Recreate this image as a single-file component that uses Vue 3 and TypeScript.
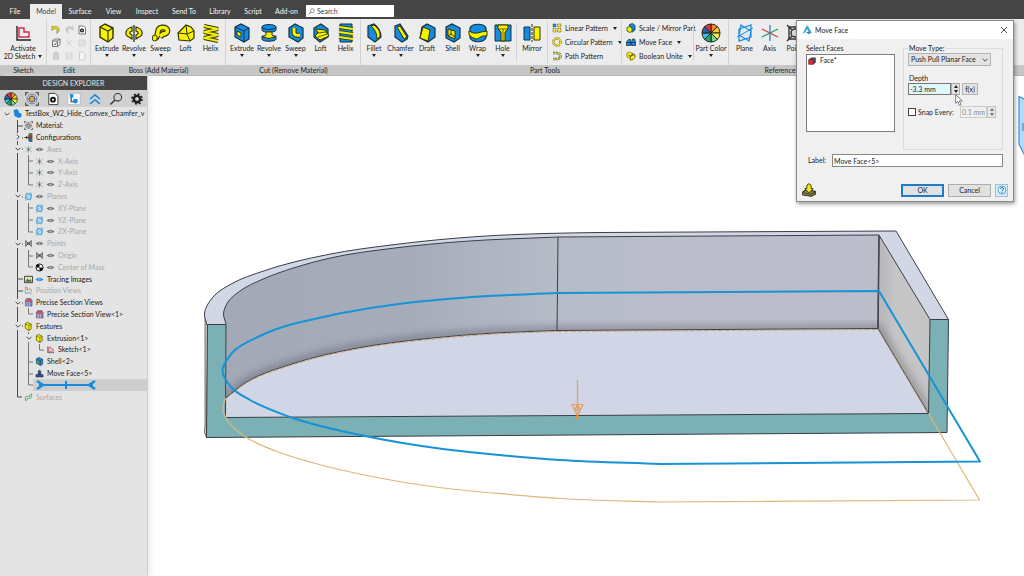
<script setup lang="ts">
import { ref } from 'vue'

interface Tool { name: string; icon: string; drop?: boolean }
interface Node { text: string; icon: string; level: number; chev?: string; eye?: string; dim?: boolean; bar?: boolean }
type Pt = [number, number]

const tabs = ['File', 'Model', 'Surface', 'View', 'Inspect', 'Send To', 'Library', 'Script', 'Add-on']
const editIcons = ['undo', 'redo', 'pagegear', 'cube', 'cross', 'frame', 'clip', 'frame', 'page']

const boss: Tool[] = [
  { name: 'Extrude', icon: 'b-extrude', drop: true },
  { name: 'Revolve', icon: 'b-revolve', drop: true },
  { name: 'Sweep', icon: 'b-sweep', drop: true },
  { name: 'Loft', icon: 'b-loft' },
  { name: 'Helix', icon: 'b-helix' },
]
const cut: Tool[] = [
  { name: 'Extrude', icon: 'c-extrude', drop: true },
  { name: 'Revolve', icon: 'c-revolve', drop: true },
  { name: 'Sweep', icon: 'c-sweep', drop: true },
  { name: 'Loft', icon: 'c-loft' },
  { name: 'Helix', icon: 'c-helix' },
]
const shape: Tool[] = [
  { name: 'Fillet', icon: 'fillet', drop: true },
  { name: 'Chamfer', icon: 'chamfer', drop: true },
  { name: 'Draft', icon: 'draft' },
  { name: 'Shell', icon: 'shell' },
  { name: 'Wrap', icon: 'wrap', drop: true },
  { name: 'Hole', icon: 'hole', drop: true },
]
const patterns: Tool[] = [
  { name: 'Linear Pattern', icon: 'linear', drop: true },
  { name: 'Circular Pattern', icon: 'circular', drop: true },
  { name: 'Path Pattern', icon: 'path' },
]
const edits: Tool[] = [
  { name: 'Scale / Mirror Part', icon: 'scale' },
  { name: 'Move Face', icon: 'moveface', drop: true },
  { name: 'Boolean Unite', icon: 'unite', drop: true },
]
const refs: Tool[] = [
  { name: 'Plane', icon: 'plane' },
  { name: 'Axis', icon: 'axis' },
  { name: 'Point', icon: 'point' },
]
const panelTools = ['wheel', 'material', 'pagegear', 'treeview', 'collapse', 'lens', 'gear']

const nodes: Node[] = [
  { text: 'TestBox_W2_Hide_Convex_Chamfer_v', icon: 't-part', level: 0, chev: 'down' },
  { text: 'Material:', icon: 'material', level: 1 },
  { text: 'Configurations', icon: 't-config', level: 1, chev: 'right' },
  { text: 'Axes', icon: 't-axis', level: 1, chev: 'down', eye: 'grey', dim: true },
  { text: 'X-Axis', icon: 't-axis', level: 2, eye: 'grey', dim: true },
  { text: 'Y-Axis', icon: 't-axis', level: 2, eye: 'grey', dim: true },
  { text: 'Z-Axis', icon: 't-axis', level: 2, eye: 'grey', dim: true },
  { text: 'Planes', icon: 'plane', level: 1, chev: 'down', eye: 'grey', dim: true },
  { text: 'XY-Plane', icon: 'plane', level: 2, eye: 'grey', dim: true },
  { text: 'YZ-Plane', icon: 'plane', level: 2, eye: 'grey', dim: true },
  { text: 'ZX-Plane', icon: 'plane', level: 2, eye: 'grey', dim: true },
  { text: 'Points', icon: 't-point', level: 1, chev: 'down', eye: 'grey', dim: true },
  { text: 'Origin', icon: 't-point', level: 2, eye: 'grey', dim: true },
  { text: 'Center of Mass', icon: 't-mass', level: 2, eye: 'grey', dim: true },
  { text: 'Tracing Images', icon: 't-image', level: 1, eye: 'blue' },
  { text: 'Position Views', icon: 't-views', level: 1, dim: true },
  { text: 'Precise Section Views', icon: 't-section', level: 1, chev: 'down' },
  { text: 'Precise Section View<1>', icon: 't-section', level: 2 },
  { text: 'Features', icon: 'b-extrude', level: 1, chev: 'down' },
  { text: 'Extrusion<1>', icon: 'b-extrude', level: 2, chev: 'down' },
  { text: 'Sketch<1>', icon: 'sketch', level: 3 },
  { text: 'Shell<2>', icon: 'c-extrude', level: 2 },
  { text: 'Move Face<5>', icon: 't-move', level: 2 },
  { text: '', icon: '', level: 2, bar: true },
  { text: 'Surfaces', icon: 't-surface', level: 1, dim: true },
]

/* Smooth run through the points, tangents weighted by chord length; no leading move command. */
function curve(p: Pt[]): string {
  const t = [0]
  for (let i = 1; i < p.length; i++) t.push(t[i - 1] + Math.hypot(p[i][0] - p[i - 1][0], p[i][1] - p[i - 1][1]))
  const m = p.map((_, i): Pt => {
    const a = Math.max(i - 1, 0), b = Math.min(i + 1, p.length - 1)
    const slope = (u: number, v: number, k: number) => (p[v][k] - p[u][k]) / (t[v] - t[u])
    if (a === i || b === i) return [slope(a, b, 0), slope(a, b, 1)]
    const h0 = t[i] - t[a], h1 = t[b] - t[i]
    const mix = (k: number) => (slope(a, i, k) * h1 + slope(i, b, k) * h0) / (h0 + h1)
    return [mix(0), mix(1)]
  })
  let d = ''
  for (let i = 0; i < p.length - 1; i++) {
    const h = (t[i + 1] - t[i]) / 3
    d += `C${p[i][0] + m[i][0] * h} ${p[i][1] + m[i][1] * h} ${p[i + 1][0] - m[i + 1][0] * h} ${p[i + 1][1] - m[i + 1][1] * h} ${p[i + 1][0]} ${p[i + 1][1]}`
  }
  return d
}
const outer: Pt[] = [[207, 325], [204.5, 314], [213, 297], [233, 283], [262, 271.5], [328, 254.5], [395, 244.5], [478, 236.5], [545, 233.5], [600, 232.5]]
const inner: Pt[] = [[226, 324], [223.5, 314], [228, 302], [240, 291], [262, 279.5], [295, 267.5], [328, 258.5], [395, 248], [462, 241.5], [558, 237]]
const floor: Pt[] = [[225.5, 398], [245, 383], [295, 363], [355, 348.5], [428, 338.5], [495, 333], [557, 330.5]]
const blueRun: Pt[] = [[660, 464], [560, 460], [510, 456], [443, 449], [365, 436], [290, 417], [250, 400], [232, 388], [222.5, 371], [232, 353], [262, 335], [328, 316], [395, 304.5], [472, 297], [557, 293]]
const sandLow: Pt[] = [[660, 502], [560, 498.5], [510, 494.5], [443, 488], [377, 477.5], [310, 462], [277, 451.5], [245, 436.5], [227, 420], [223, 408], [225.5, 398]]

const outerD = 'M207 325' + curve(outer) + 'L896 231L948.5 319.5'
const innerD = 'M226 324' + curve(inner) + 'L879 235L930 319.5'
const floorD = 'M225.5 398' + curve(floor) + 'L878 328.5L928.5 413.5'
const rimD = outerD + 'L930 319.5L879 235L558 237' + curve([...inner].reverse()) + 'Z'
const wallD = 'M226 324' + curve(inner) + 'L879 235L878 328.5L557 330.5' + curve([...floor].reverse()) + 'Z'
const baseD = floorD + 'L225.5 417.5Z'
const blueD = 'M660 464' + curve(blueRun) + 'L879 291L980 461.5Z'
const sandD = 'M928.5 413.5L979.5 500L660 502' + curve(sandLow)

const search = ref('')
const depth = ref('-3.3 mm')
const snap = ref(false)
const snapStep = ref('0.1 mm')
const label = ref('Move Face<5>')
</script>

<template>
  <div class="app">
    <svg class="sprite" aria-hidden="true">
      <symbol id="b-extrude" viewBox="0 0 20 20"><path d="M3 4L8 1L16 5V15L11 19L3 14Z" fill="#f7f200" stroke="#333300" stroke-width="1.4" /><path d="M3 4L11 8L16 5M11 8V19" fill="none" stroke="#333300" stroke-width="1.2" /></symbol>
      <symbol id="b-revolve" viewBox="0 0 20 20"><path d="M8 16L5 14C0 12 1 6 8 4V8C5 9 5 11 8 12ZM12 16L15 14C20 12 19 6 12 4V8C15 9 15 11 12 12Z" fill="#f7f200" stroke="#333300" stroke-width="1.2" /><path d="M10 2V19" stroke="#222" stroke-width="1.2" /></symbol>
      <symbol id="b-sweep" viewBox="0 0 20 20"><path d="M4 15C9 14 4 5 11 4.500C18 4 18 11 12 11L9 14" fill="none" stroke="#333300" stroke-width="6" /><path d="M4 15C9 14 4 5 11 4.500C18 4 18 11 12 11L9 13.500" fill="none" stroke="#f7f200" stroke-width="3.600" /><ellipse cx="3.800" cy="15" rx="2.500" ry="3" fill="#f7f200" stroke="#333300" /></symbol>
      <symbol id="b-loft" viewBox="0 0 20 20"><path d="M2 10L10 2L15 4L18 8V15L14 18L3 17Z" fill="#f7f200" stroke="#333300" stroke-width="1.200" /><path d="M2 10L11 11L18 8M11 11L14 18M10 2L11 11" fill="none" stroke="#333300" /></symbol>
      <symbol id="b-helix" viewBox="0 0 20 20"><path d="M3 3L17 6L3 9L17 12L3 15L17 18" fill="none" stroke="#333300" stroke-width="4" /><path d="M3 3L17 6L3 9L17 12L3 15L17 18" fill="none" stroke="#f7f200" stroke-width="2" /></symbol>
      <symbol id="c-extrude" viewBox="0 0 20 20"><path d="M3 4L9 1L17 5V16L12 19L3 14Z" fill="#168ce0" stroke="#143044" stroke-width="1.200" /><path d="M3 4L12 8L17 5M12 8V19" fill="none" stroke="#143044" /><path d="M5 8L9 10V14L5 12Z" fill="#f7f200" stroke="#333300" /></symbol>
      <symbol id="c-revolve" viewBox="0 0 20 20"><path d="M3 4V7C3 10 17 10 17 7V4ZM3 13V16C3 19 17 19 17 16V13Z" fill="#168ce0" stroke="#143044" /><ellipse cx="10" cy="4" rx="7" ry="2.500" fill="#168ce0" stroke="#143044" /><path d="M7 9H13V12L16 14Q10 17 4 14L7 12Z" fill="#f7f200" stroke="#333300" /></symbol>
      <symbol id="c-sweep" viewBox="0 0 20 20"><path d="M3 5L9 1L17 5V15L12 19L3 14Z" fill="#168ce0" stroke="#143044" stroke-width="1.200" /><path d="M8 5V10Q9 13 14 12" fill="none" stroke="#333300" stroke-width="5" /><path d="M8 5V10Q9 13 14 12" fill="none" stroke="#f7f200" stroke-width="3" /></symbol>
      <symbol id="c-loft" viewBox="0 0 20 20"><path d="M3 5L10 1L17 6V14L9 19L3 14Z" fill="#168ce0" stroke="#143044" stroke-width="1.200" /><path d="M5 6L14 7L18 13L9 17L4 13L7 10Z" fill="#f7f200" stroke="#333300" /><path d="M7 10L15 9M7 14L16 11" stroke="#333300" stroke-width=".8" /></symbol>
      <symbol id="c-helix" viewBox="0 0 20 20"><path d="M4 1H16V19H4Z" fill="#168ce0" stroke="#143044" /><path d="M3 4L17 6M3 9L17 11M3 14L17 16" stroke="#333300" stroke-width="3.600" /><path d="M3 4L17 6M3 9L17 11M3 14L17 16" stroke="#f7f200" stroke-width="1.800" /></symbol>
      <symbol id="fillet" viewBox="0 0 20 20"><path d="M4 3L10 1Q17 6 17 14L11 19L4 14Z" fill="#168ce0" stroke="#143044" stroke-width="1.200" /><path d="M7 3L10 2Q17 7 16 14L13 16Q13 8 7 3Z" fill="#f7f200" stroke="#333300" /></symbol>
      <symbol id="chamfer" viewBox="0 0 20 20"><path d="M4 3L9 1L17 13L16 16L11 19L4 14Z" fill="#168ce0" stroke="#143044" stroke-width="1.200" /><path d="M6 4L9 3L16 14L13 16Z" fill="#f7f200" stroke="#333300" /></symbol>
      <symbol id="draft" viewBox="0 0 20 20"><path d="M5 4L10 1L18 5V14L11 19L3 15Z" fill="#168ce0" stroke="#143044" stroke-width="1.200" /><path d="M6 4L13 7L11 18L3 15Z" fill="#f7f200" stroke="#333300" /></symbol>
      <symbol id="shell" viewBox="0 0 20 20"><path d="M3 4L9 1L17 5V15L11 19L3 15Z" fill="#168ce0" stroke="#143044" stroke-width="1.200" /><path d="M5 6L12 8V16L5 13Z" fill="#f7f200" stroke="#333300" /><path d="M8 7V11L12 14M8 11L5 13" fill="none" stroke="#333300" /></symbol>
      <symbol id="wrap" viewBox="0 0 20 20"><path d="M2 5C4 0 16 0 18 5V15C15 20 5 20 2 15Z" fill="#168ce0" stroke="#143044" stroke-width="1.200" /><path d="M1 8Q5 11 9 10T19 8V13Q14 12 11 15T1 12Z" fill="#f7f200" stroke="#333300" /></symbol>
      <symbol id="hole" viewBox="0 0 20 20"><path d="M2 2H18V18H2Z" fill="#168ce0" stroke="#143044" /><path d="M5 2H15V6L12 9V18H8V9L5 6Z" fill="#f7f200" stroke="#333300" /><path d="M5 6H15M10 6V18" stroke="#333300" stroke-width=".7" /></symbol>
      <symbol id="mirror" viewBox="0 0 20 20"><path d="M2 4H8V17H2Z" fill="#168ce0" stroke="#143044" /><path d="M12 4H18V17H12Z" fill="#f7f200" stroke="#333300" /><path d="M10 1V19" stroke="#222" stroke-dasharray="3 1" /></symbol>
      <symbol id="linear" viewBox="0 0 20 20"><path d="M2 2H8V8H2Z" fill="#168ce0" stroke="#555" /><path d="M11 2H18V8H11ZM2 11H8V18H2ZM11 11H18V18H11Z" fill="#f5e94a" stroke="#776c20" stroke-width="1.500" stroke-dasharray="3 1" /></symbol>
      <symbol id="circular" viewBox="0 0 20 20"><circle cx="10" cy="10" r="7" fill="none" stroke="#776c10" stroke-width="5" stroke-dasharray="4 1.500" /><circle cx="10" cy="10" r="7" fill="none" stroke="#f3e62a" stroke-width="3" stroke-dasharray="4 1.500" /></symbol>
      <symbol id="path" viewBox="0 0 20 20"><path d="M2 4H10Q17 5 17 10T10 16H2" fill="none" stroke="#444020" stroke-width="5" stroke-dasharray="4 1.500" /><path d="M2 4H10Q17 5 17 10T10 16H2" fill="none" stroke="#e7df50" stroke-width="2.500" stroke-dasharray="4 1.500" /></symbol>
      <symbol id="scale" viewBox="0 0 20 20"><path d="M7 3L13 1L18 5V14L13 18L7 15Z" fill="#168ce0" stroke="#143044" stroke-width="1.500" /><path d="M2 9L7 7L12 10V17L8 19L2 16Z" fill="#f7f200" stroke="#333300" stroke-width="1.500" /></symbol>
      <symbol id="moveface" viewBox="0 0 20 20"><path d="M1 17V10L5 5H9V17ZM11 17V10L13 4H17L19 10V17Z" fill="#168ce0" stroke="#143044" stroke-width="1.500" /><path d="M1 11H19" stroke="#143044" stroke-width="1.500" /></symbol>
      <symbol id="unite" viewBox="0 0 20 20"><circle cx="7" cy="8" r="6" fill="#f7f200" stroke="#555000" /><path d="M9 10L18 7V13Q15 19 8 18Z" fill="#f7f200" stroke="#555000" stroke-width="1.500" /><path d="M5 8L9 11L15 4" fill="none" stroke="#333" stroke-width="2" /></symbol>
      <symbol id="wheel" viewBox="0 0 20 20">
        <g stroke="#222" stroke-width="1">
          <path d="M10 10V1A9 9 0 0 1 16.400 3.600Z" fill="#f28a18" /><path d="M10 10L16.400 3.600A9 9 0 0 1 19 10Z" fill="#f5c928" /><path d="M10 10H19A9 9 0 0 1 16.400 16.400Z" fill="#f6ee3a" /><path d="M10 10L16.400 16.400A9 9 0 0 1 10 19Z" fill="#77d68c" /><path d="M10 10V19A9 9 0 0 1 3.600 16.400Z" fill="#22a85b" /><path d="M10 10L3.600 16.400A9 9 0 0 1 1 10Z" fill="#38bdec" /><path d="M10 10H1A9 9 0 0 1 3.600 3.600Z" fill="#2a62b0" /><path d="M10 10L3.600 3.600A9 9 0 0 1 10 1Z" fill="#e33727" />
        </g>
      </symbol>
      <symbol id="plane" viewBox="0 0 20 20"><path d="M4 6L16 2V14L4 18ZM6 2L16 8L14 18L4 12Z" fill="#cfe8f8" fill-opacity=".5" stroke="#1f8fdb" stroke-width="1.300" /><path d="M2 14L18 5" stroke="#1f8fdb" /></symbol>
      <symbol id="axis" viewBox="0 0 20 20"><path d="M10 2V18" stroke="#2b86c8" stroke-width="1.300" /><path d="M2 6L18 14" stroke="#cc4a4a" stroke-width="1.300" /><path d="M2 14L18 6" stroke="#2e9d62" stroke-width="1.300" /></symbol>
      <symbol id="point" viewBox="0 0 20 20"><path d="M4 4H16V16H4ZM2 2L18 18M18 2L2 18" fill="none" stroke="#333" stroke-width="1.400" /><circle cx="10" cy="10" r="4" fill="#ddd" stroke="#333" stroke-width="1.500" /></symbol>
      <symbol id="sketch" viewBox="0 0 20 20"><path d="M4 3V17H18" fill="none" stroke="#222" stroke-width="1.400" /><path d="M6 5H11V9H16V14H6Z" fill="none" stroke="#d3294f" stroke-width="1.400" /></symbol>
      <symbol id="undo" viewBox="0 0 20 20"><path d="M2 3V11L5 8Q14 4 12 17Q20 9 13 4Q8 1 5 4Z" fill="#e9e230" stroke="#6d6810" stroke-width="1.200" /></symbol>
      <symbol id="redo" viewBox="0 0 20 20"><path d="M18 3V11L15 8Q6 4 8 17Q0 9 7 4Q12 1 15 4Z" fill="#cfcfcf" stroke="#b5b5b5" /></symbol>
      <symbol id="cube" viewBox="0 0 20 20"><path d="M3 6H13V17H3ZM3 6L7 2H18V13L13 17M13 6L18 2" fill="none" stroke="#555" stroke-width="1.500" /><path d="M6 12L8 14L11 9" fill="none" stroke="#555" stroke-width="1.500" /></symbol>
      <symbol id="cross" viewBox="0 0 20 20"><path d="M5 5L15 15M15 5L5 15" stroke="#cfcfcf" stroke-width="2" /></symbol>
      <symbol id="frame" viewBox="0 0 20 20"><path d="M4 4H16V16H4ZM4 16L16 4" fill="#e5e5e5" stroke="#cfcfcf" stroke-width="1.500" /></symbol>
      <symbol id="clip" viewBox="0 0 20 20"><path d="M5 4H15V17H5ZM8 2H12V5H8Z" fill="#d2d2d2" stroke="#c4c4c4" stroke-width="1.500" /></symbol>
      <symbol id="page" viewBox="0 0 20 20"><path d="M5 2H12L16 6V18H5Z" fill="#f4f4f4" stroke="#c4c4c4" stroke-width="1.500" /></symbol>
      <symbol id="gear" viewBox="0 0 20 20"><circle cx="10" cy="10" r="4.500" fill="none" stroke="#1c1c1c" stroke-width="3.500" /><circle cx="10" cy="10" r="7" fill="none" stroke="#1c1c1c" stroke-width="2.600" stroke-dasharray="2.750 2.750" /></symbol>
      <symbol id="pagegear" viewBox="0 0 20 20"><path d="M4 2H13L17 6V18H4Z" fill="#fff" stroke="#333" stroke-width="1.300" /><circle cx="10" cy="11" r="2.800" fill="#fff" stroke="#111" stroke-width="2.600" /></symbol>
      <symbol id="material" viewBox="0 0 20 20"><circle cx="10" cy="10" r="7" fill="#d9dde6" stroke="#667" stroke-width="1.200" /><path d="M1 5V1H5M15 1H19V5M19 15V19H15M5 19H1V15" fill="none" stroke="#333" stroke-width="1.500" /><circle cx="10" cy="10" r="4" fill="#e8a52b" stroke="#4d64a0" stroke-width="1.500" /><path d="M10 3V7M10 13V17M3 10H7M13 10H17" stroke="#4d64a0" /></symbol>
      <symbol id="treeview" viewBox="0 0 20 20"><path d="M1 2H19V18H1Z" fill="#f7fafc" stroke="#a7b4bd" /><path d="M6 4V14H11" fill="none" stroke="#333" stroke-width="1.500" /><path d="M4 3H9V8H4Z" fill="#168ce0" /><circle cx="12" cy="13" r="3.500" fill="#168ce0" /></symbol>
      <symbol id="collapse" viewBox="0 0 20 20"><path d="M3 10L10 4L17 10M3 17L10 11L17 17" fill="none" stroke="#168ce0" stroke-width="2.200" /></symbol>
      <symbol id="lens" viewBox="0 0 20 20"><circle cx="12.500" cy="7.500" r="5.500" fill="none" stroke="#333" stroke-width="1.500" /><path d="M8.500 11.500L2 18" stroke="#333" stroke-width="2" /></symbol>
      <symbol id="t-part" viewBox="0 0 20 20"><path d="M2 3L8 1L12 4V8L18 11V17L12 19L4 15Z" fill="#1487e0" stroke="#0b5fa4" /></symbol>
      <symbol id="t-config" viewBox="0 0 20 20"><path d="M1 10H11M11 3V17M6 7V13" stroke="#222" stroke-width="2" /><path d="M12 1H18V6H12Z" fill="#4d9c35" stroke="#222" /><path d="M12 7H18V12H12Z" fill="#d33" stroke="#222" /><path d="M12 13H18V19H12Z" fill="#27c" stroke="#222" /></symbol>
      <symbol id="t-axis" viewBox="0 0 20 20"><path d="M10 2V18M3 5L17 15M3 15L17 5" stroke="#698a91" stroke-width="1.400" /><circle cx="10" cy="10" r="2" fill="#555" /></symbol>
      <symbol id="t-point" viewBox="0 0 20 20"><path d="M4 3V17M16 3V17M4 5L16 15M16 5L4 15" stroke="#444" stroke-width="2" /><circle cx="10" cy="10" r="3" fill="#555" /></symbol>
      <symbol id="t-mass" viewBox="0 0 20 20"><circle cx="10" cy="10" r="8" fill="#fff" stroke="#111" stroke-width="2" /><path d="M10 10V2A8 8 0 0 0 2 10ZM10 10V18A8 8 0 0 0 18 10Z" fill="#111" /></symbol>
      <symbol id="t-image" viewBox="0 0 20 20"><path d="M1 3H19V17H1Z" fill="#e8e3a0" stroke="#333" stroke-width="2" /><path d="M3 15L8 8L12 12L15 9L17 15Z" fill="#3f6b45" /></symbol>
      <symbol id="t-views" viewBox="0 0 20 20"><path d="M3 2L8 4V9L3 7ZM11 6L16 8V13" fill="none" stroke="#d66" stroke-width="1.700" /><path d="M3 10V16H9M9 13L17 18" fill="none" stroke="#59b" stroke-width="1.800" /></symbol>
      <symbol id="t-section" viewBox="0 0 20 20"><path d="M3 5L6 1H15L18 5V18H3Z" fill="#6c86bd" stroke="#3c4f80" /><path d="M3 7H17M5 3H15" stroke="#d84848" stroke-width="2.500" /><path d="M7 9V18M12 9V17" stroke="#e9a4aa" stroke-width="2.400" /></symbol>
      <symbol id="t-move" viewBox="0 0 20 20"><path d="M2 18V12H18V18ZM7 12V5H13V12Z" fill="#2d4f86" stroke="#222c44" /><path d="M10 1L14 6H6Z" fill="#2d4f86" /></symbol>
      <symbol id="t-surface" viewBox="0 0 20 20"><path d="M3 17V9Q5 6 10 8Q14 9 13 4L17 2V9Q15 14 10 12Q6 11 7 15Z" fill="#c8eed1" stroke="#39915a" stroke-width="1.500" /></symbol>
      <symbol id="eye-grey" viewBox="0 0 20 20"><path d="M1 10Q10 2 19 10Q10 18 1 10Z" fill="#777" /><circle cx="10" cy="10" r="2.500" fill="#bbb" /></symbol>
      <symbol id="eye-blue" viewBox="0 0 20 20"><path d="M1 10Q10 2 19 10Q10 18 1 10Z" fill="#2593e6" /><circle cx="10" cy="10" r="2.500" fill="#7cc0f4" /></symbol>
      <symbol id="chev-down" viewBox="0 0 20 20"><path d="M4 7L10 13L16 7" fill="none" stroke="#333" stroke-width="2.200" /></symbol>
      <symbol id="chev-right" viewBox="0 0 20 20"><path d="M7 4L13 10L7 16" fill="none" stroke="#333" stroke-width="2.200" /></symbol>
      <symbol id="stamp" viewBox="0 0 20 20"><path d="M1 13L6 9L19 12V16L13 19L1 17Z" fill="#8a8a3a" stroke="#222" stroke-width="1.500" /><path d="M3 14L12 16L18 13" fill="none" stroke="#222" /><path d="M7 3L10 1L13 3V8H16L10 14L4 8H7Z" fill="#f2ea1a" stroke="#333300" stroke-width="1.300" /></symbol>
    </svg>

    <header class="topbar">
      <nav class="tabs">
        <button v-for="t in tabs" :key="t" class="tab" :class="{ active: t === 'Model' }">{{ t }}</button>
      </nav>
      <label class="search">
        <svg class="i8"><use href="#lens" /></svg>
        <input v-model="search" type="text" placeholder="Search" aria-label="Search" />
      </label>
    </header>

    <section class="ribbon">
      <div class="group g-sketch">
        <div class="tools">
          <button class="tool"><svg class="i20"><use href="#sketch" /></svg><span>Activate</span><span class="second">2D Sketch<i class="caret" /></span></button>
        </div>
        <h2>Sketch</h2>
      </div>
      <div class="group g-edit">
        <div class="tools edit-grid">
          <button v-for="(e, i) in editIcons" :key="i" class="bare" :aria-label="e"><svg class="i10"><use :href="'#' + e" /></svg></button>
        </div>
        <h2>Edit</h2>
      </div>
      <div class="group g-solid">
        <div class="tools solid">
          <button v-for="t in boss" :key="t.name" class="tool"><svg class="i20"><use :href="'#' + t.icon" /></svg><span>{{ t.name }}</span><i v-if="t.drop" class="caret" /></button>
        </div>
        <h2>Boss (Add Material)</h2>
      </div>
      <div class="group g-solid">
        <div class="tools solid">
          <button v-for="t in cut" :key="t.name" class="tool"><svg class="i20"><use :href="'#' + t.icon" /></svg><span>{{ t.name }}</span><i v-if="t.drop" class="caret" /></button>
        </div>
        <h2>Cut (Remove Material)</h2>
      </div>
      <div class="group g-part">
        <div class="tools part">
          <div class="shapes">
            <button v-for="t in shape" :key="t.name" class="tool"><svg class="i20"><use :href="'#' + t.icon" /></svg><span>{{ t.name }}</span><i v-if="t.drop" class="caret" /></button>
          </div>
          <button class="tool ruled"><svg class="i20"><use href="#mirror" /></svg><span>Mirror</span></button>
          <div class="stack ruled">
            <button v-for="t in patterns" :key="t.name" class="line"><svg class="i10"><use :href="'#' + t.icon" /></svg>{{ t.name }}<i v-if="t.drop" class="caret" /></button>
          </div>
          <div class="stack ruled">
            <button v-for="t in edits" :key="t.name" class="line"><svg class="i10"><use :href="'#' + t.icon" /></svg>{{ t.name }}<i v-if="t.drop" class="caret" /></button>
          </div>
          <button class="tool ruled"><svg class="i20"><use href="#wheel" /></svg><span>Part Color</span><i class="caret" /></button>
        </div>
        <h2>Part Tools</h2>
      </div>
      <div class="group g-refs">
        <div class="tools refs">
          <button v-for="t in refs" :key="t.name" class="tool"><svg class="i20"><use :href="'#' + t.icon" /></svg><span>{{ t.name }}</span></button>
        </div>
        <h2>References</h2>
      </div>
    </section>

    <main class="work">
      <aside class="explorer">
        <h1>DESIGN EXPLORER</h1>
        <div class="panel-tools">
          <button v-for="p in panelTools" :key="p" class="bare" :aria-label="p"><svg class="i14"><use :href="'#' + p" /></svg></button>
        </div>
        <div class="tree">
          <svg class="wires" viewBox="0 0 147 295" fill="none">
            <path d="M17.500 12V289H22M18 18H23M18 30H23M18 41H23M18 89H23M18 136H23M18 171H23M18 183H23M18 195H23M18 218H23" stroke="#4a4a4a" />
            <path d="M28.500 47V77H33M28.500 53H33M28.500 65H33M28.500 95V124H33M28.500 100H33M28.500 112H33M28.500 142V159H33M28.500 148H33M28.500 200V206H33M28.500 224V277H33M28.500 254H33M28.500 266H33M39.500 236V242H44" stroke="#777" />
          </svg>
          <ul>
            <li v-for="(n, i) in nodes" :key="i" :class="['l' + n.level, { dim: n.dim, current: n.bar }]">
              <svg v-if="n.bar" class="marker" viewBox="0 0 60 10"><path d="M3 5H57M30 1V9" stroke="#168ce0" stroke-width="2" /><path d="M1 1L7 5L1 9M59 1L53 5L59 9" fill="none" stroke="#168ce0" stroke-width="2.500" /></svg>
              <template v-else>
                <span class="cell"><svg v-if="n.chev" class="i8 chev"><use :href="'#chev-' + n.chev" /></svg></span>
                <span class="cell"><svg class="i9"><use :href="'#' + n.icon" /></svg></span>
                <span v-if="n.eye" class="cell"><svg class="i9"><use :href="'#eye-' + n.eye" /></svg></span>
                <span class="name">{{ n.text }}</span>
              </template>
            </li>
          </ul>
        </div>
      </aside>

      <section class="canvas">
        <svg viewBox="153 76 871 500" preserveAspectRatio="xMinYMin meet">
          <defs>
            <linearGradient id="wall" x1="226" x2="700" y1="0" y2="0" gradientUnits="userSpaceOnUse">
              <stop offset="0" stop-color="#a3a9b7" /><stop offset=".4" stop-color="#a6adba" /><stop offset=".7" stop-color="#b7bbc8" /><stop offset="1" stop-color="#bbbeca" />
            </linearGradient>
            <linearGradient id="side" x1="882" y1="300" x2="930" y2="300" gradientUnits="userSpaceOnUse">
              <stop offset="0" stop-color="#b9b9bd" /><stop offset=".3" stop-color="#c6c6c7" /><stop offset="1" stop-color="#c3c4c5" />
            </linearGradient>
            <filter id="soft" x="-10%" y="-10%" width="120%" height="120%"><feGaussianBlur stdDeviation="4" /></filter>
            <clipPath id="wallclip"><path :d="wallD" /><path d="M879 235L930 319.500L928.500 413.500L878 328.500Z" /></clipPath>
          </defs>
          <path d="M205 314V427Q203 432 206.500 437.500L208 325Z" fill="#c3c8ce" stroke="#555" stroke-width=".8" />
          <path :d="rimD" fill="#d2d7e6" />
          <path :d="wallD" fill="url(#wall)" />
          <path d="M879 235L930 319.500L928.500 413.500L878 328.500Z" fill="url(#side)" />
          <g clip-path="url(#wallclip)"><path :d="floorD" fill="none" stroke="#30333c" stroke-width="7" opacity=".4" filter="url(#soft)" /></g>
          <path :d="baseD" fill="#d0d6e5" />
          <path d="M207.500 324.500H226L225.500 417.500L928.500 413.500L930 319.500H948.500L947 432.500L206.500 437.500Z" fill="#7bb0b5" />
          <g fill="none" stroke="#3a3e46" stroke-width="1">
            <path :d="outerD" />
            <path :d="innerD" />
            <path :d="floorD" />
            <path d="M558 237L557 330.500M879 235L878 328.500M207.500 324.500H226L225.500 417.500L928.500 413.500L930 319.500H948.500L947 432.500L206.500 437.500Z" />
          </g>
          <path d="M879 235L878 328.500" stroke="#444850" stroke-width="1.600" />
          <path :d="floorD" fill="none" stroke="#c89455" stroke-width=".8" stroke-dasharray="5 2" transform="translate(0 1)" />
          <path :d="sandD" fill="none" stroke="#dfb778" stroke-width="1.200" />
          <path :d="blueD" fill="none" stroke="#1793d6" stroke-width="2" stroke-linejoin="round" />
          <path d="M577.500 380V416M572 404.500H583L577.500 416ZM577.500 404L575 410H580Z" fill="none" stroke="#ee9c55" stroke-width="1.200" />
          <circle cx="577" cy="417.500" r="1.800" fill="#ee8f3c" />
          <path d="M1019 96.500L1026 100V158L1019 144Z" fill="#b4dafa" stroke="#3a8ee0" stroke-width="1.200" />
          <path d="M1023 123V131" stroke="#4a7097" />
        </svg>
      </section>
    </main>

    <form class="dialog" @submit.prevent>
      <div class="title">
        <svg class="i10" viewBox="0 0 20 20"><path d="M1 18L9 2H12L19 15L14 16L10 8L7 14Z" fill="#35a6dd" /><path d="M7 14L19 15L14 18Z" fill="#156fae" /></svg>
        <span>Move Face</span>
        <button class="bare" type="button" aria-label="Close"><svg class="i8" viewBox="0 0 16 16"><path d="M2 2L14 14M14 2L2 14" stroke="#222" stroke-width="1.600" /></svg></button>
      </div>
      <div class="body">
        <div class="faces">
          <span id="faces-label">Select Faces</span>
          <ul class="list" aria-labelledby="faces-label">
            <li><svg class="i8" viewBox="0 0 20 20"><path d="M2 6L8 2H19V13L14 18H2Z" fill="#444a66" stroke="#222" /><path d="M2 7H13V18H2Z" fill="#e02a2a" stroke="#811" /></svg>Face*</li>
          </ul>
        </div>
        <fieldset>
          <legend><label for="move-type">Move Type:</label></legend>
          <div class="pick">
            <select id="move-type"><option>Push Pull Planar Face</option></select>
            <svg class="i8"><use href="#chev-down" /></svg>
          </div>
          <label class="depth-label" for="depth">Depth</label>
          <div class="row">
            <input id="depth" v-model="depth" class="depth" type="text" />
            <button class="spin" type="button" aria-label="Step depth"><i class="up" /><i class="down" /></button>
            <button class="fx" type="button">f(x)</button>
          </div>
          <div class="row snap">
            <input id="snap" v-model="snap" type="checkbox" />
            <label for="snap">Snap Every:</label>
            <input v-model="snapStep" class="step" type="text" aria-label="Snap step" disabled />
            <button class="spin pale" type="button" aria-label="Step snap" disabled><i class="up" /><i class="down" /></button>
          </div>
        </fieldset>
      </div>
      <div class="label-row">
        <label for="label">Label:</label>
        <input id="label" v-model="label" type="text" />
      </div>
      <div class="actions">
        <svg class="i14"><use href="#stamp" /></svg>
        <button class="ok" type="submit">OK</button>
        <button class="cancel" type="button">Cancel</button>
        <button class="help" type="button" aria-label="Help"><svg class="i10" viewBox="0 0 20 20"><circle cx="10" cy="10" r="8" fill="#e6f4fc" stroke="#2b93cf" stroke-width="1.600" /><path d="M7 8Q7 5 10 5T13 8Q13 10 10 11V13M10 14V16" fill="none" stroke="#1c6fae" stroke-width="2" /></svg></button>
      </div>
      <svg class="pointer" viewBox="0 0 12 18"><path d="M1 1V14L4 11L6.500 17L9 16L6.500 10.500H11Z" fill="#fff" stroke="#444" /></svg>
    </form>
  </div>
</template>

<style>
body { background: #fff; }
</style>

<style scoped>
.app { position: relative; display: flex; flex-direction: column; min-height: 100vh; overflow: hidden; font: 7px/9px Lato, Roboto, sans-serif; color: #222; }
.app * { box-sizing: border-box; }
.sprite { position: absolute; width: 0; height: 0; }
button, input, select { font: inherit; color: inherit; margin: 0; padding: 0; border: 0; background: none; border-radius: 0; outline: 0; white-space: nowrap; }
h1, h2, ul, li { margin: 0; padding: 0; list-style: none; font: inherit; }
svg { display: block; flex: none; }
.i8 { width: 8px; height: 8px; }
.i9 { width: 9px; height: 9px; }
.i10 { width: 10px; height: 10px; }
.i14 { width: 14px; height: 14px; }
.i20 { width: 20px; height: 20px; }
.bare { display: grid; place-items: center; }
.caret { display: block; border: 2px solid transparent; border-top: 3px solid #222; border-bottom: 0; }

.topbar { display: flex; align-items: flex-end; height: 19px; background: #454545; }
.tabs { display: grid; grid-template-columns: 30px 32px 36px 31px 36px 38px 34px 32px 35px; height: 15px; }
.tab { color: #f4f4f4; text-align: center; }
.tab.active { background: #ececec; color: #444; }
.search { display: flex; align-items: center; gap: 2px; width: 88px; height: 12px; margin: 0 0 2px 2px; padding-left: 2px; background: #fff; }
.search svg { width: 7px; height: 7px; }
.search input { width: 70px; }
.search input::placeholder { color: #444; opacity: 1; }

.ribbon { display: flex; height: 57px; background: #ececec; }
.group { display: flex; flex-direction: column; flex: none; }
.tools { height: 46px; padding-top: 4px; border-right: 1px solid #d2d2d2; }
.group h2 { height: 11px; line-height: 11px; text-align: center; background: #c6c6c6; border-bottom: 1px solid #b8b8b8; }
.g-sketch { width: 47px; }
.g-edit { width: 44px; }
.g-solid { width: 135px; }
.g-part { width: 368px; }
.g-refs { flex: 1; }
.g-refs h2 { padding-right: 190px; }
.tool { display: flex; flex-direction: column; align-items: center; justify-content: flex-start; height: 38px; }
.tool span { margin-top: 1px; }
.tool .caret { margin-top: 1px; }
.g-sketch .tool { width: 46px; line-height: 8px; }
.tool .second { display: flex; align-items: center; gap: 3px; margin-top: 0; }
.edit-grid { display: grid; grid-template-columns: repeat(3, 13px); grid-auto-rows: 13px; padding-left: 2px; }
.solid { display: grid; grid-template-columns: 26px 28px 25px 25px 25px; padding-left: 3px; }
.part { display: grid; grid-template-columns: 155px 31px 74px 72px 35px; }
.shapes { display: grid; grid-template-columns: 26px 27px 26px 25px 25px 25px; }
.ruled { border-left: 1px solid #d2d2d2; }
.stack { display: grid; grid-template-rows: repeat(3, 14px); height: 42px; margin-top: -2px; padding-left: 4px; }
.line { display: flex; align-items: center; gap: 3px; }
.line .caret { margin-left: 2px; }
.refs { display: grid; grid-template-columns: repeat(3, 25px); padding-left: 3px; border: 0; }

.work { display: flex; flex: 1; }
.explorer { width: 148px; flex: none; background: #e4e4e4; border-right: 1px solid #cfcfcf; box-shadow: 3px 0 4px #ededed; z-index: 1; }
.explorer h1 { height: 14px; line-height: 14px; text-align: center; background: #454545; color: #e6e6e6; }
.panel-tools { display: grid; grid-template-columns: repeat(7, 21px); height: 17px; background: #d0d0d0; }
.panel-tools svg { width: 14px; height: 14px; }
.tree { position: relative; margin-top: 1px; }
.wires { position: absolute; width: 147px; height: 295px; }
.tree ul { position: relative; display: grid; height: 295px; grid-template-columns: minmax(0, 1fr); grid-template-rows: repeat(25, 1fr); }
.tree li { display: flex; align-items: center; min-height: 0; padding-left: 1px; white-space: nowrap; }
.tree li.l1 { padding-left: 12px; }
.tree li.l2 { padding-left: 23px; }
.tree li.l3 { padding-left: 34px; }
.cell { display: grid; place-items: center; flex: none; width: 11px; }
.chev { background: #e4e4e4; }
.name { padding-left: 2px; }
.dim { color: #a8a8a8; }
.tree li.current { margin-left: 33px; padding-left: 3px; background: #cecece; }
.marker { width: 60px; height: 10px; }
.canvas { flex: 1; min-width: 0; padding-left: 5px; background: #fff; }
.canvas > svg { width: 100%; height: auto; }

.dialog { position: absolute; top: 20px; right: 10px; width: 218px; background: #f0f0f0; border: 1px solid #8a8a8a; box-shadow: 1px 2px 4px #0006; color: #222; }
.title { display: flex; align-items: center; gap: 3px; height: 18px; padding: 0 5px; background: #fff; }
.title .bare { margin-left: auto; }
.body { display: grid; grid-template-columns: 89px 100px; gap: 8px; padding: 5px 9px 0; }
.list { height: 78px; margin-top: 1px; padding: 1px; background: #fff; border: 1px solid #7d7d7d; }
.list li { display: flex; align-items: center; gap: 4px; }
fieldset { min-width: 0; height: 106px; margin: 0; padding: 0 4px; border: 1px solid #dcdcdc; }
legend { height: 9px; padding: 0 1px; }
.pick { position: relative; height: 13px; }
.pick select { width: 83px; height: 13px; padding-left: 2px; appearance: none; background: #e3e3e3; border: 1px solid #b3b3b3; }
.pick svg { position: absolute; right: 9px; top: 3px; }
.depth-label { display: block; margin: 8px 0 0 1px; }
.row { display: flex; align-items: center; height: 12px; }
.depth { width: 43px; height: 12px; padding-left: 1px; background: #dff8fc; border: 1px solid #777; }
.spin { display: flex; flex-direction: column; align-items: center; justify-content: center; gap: 2px; width: 9px; height: 12px; background: #e2e2e2; border: 1px solid #aaa; }
.up { border: 2px solid transparent; border-bottom: 3px solid #222; border-top: 0; }
.down { border: 2px solid transparent; border-top: 3px solid #222; border-bottom: 0; }
.pale { opacity: .6; }
.fx { width: 16px; height: 12px; margin-left: 2px; background: #e2e2e2; border: 1px solid #b5b5b5; }
.snap { margin-top: 11px; }
.snap input[type="checkbox"] { width: 8px; height: 8px; margin-right: 2px; appearance: none; background: #fff; border: 1px solid #444; }
.snap label { width: 42px; white-space: nowrap; }
.step { width: 27px; height: 12px; padding-left: 1px; color: #888; border: 1px solid #ccc; }
.label-row { display: flex; align-items: center; margin-top: 4px; padding: 0 10px 0 11px; }
.label-row label { width: 24px; }
.label-row input { flex: 1; min-width: 0; height: 13px; padding-left: 1px; background: #fff; border: 1px solid #888; }
.actions { display: flex; align-items: center; gap: 4px; padding: 16px 5px 4px; }
.actions button { width: 43px; height: 13px; background: #e1e1e1; border: 1px solid #adadad; }
.actions .ok { margin-left: auto; border: 2px solid #1c7cc8; line-height: 9px; }
.actions .help { display: grid; place-items: center; width: 13px; background: #d7ebf7; border-color: #9cc3dc; }
.pointer { position: absolute; left: 158px; top: 73px; width: 8px; height: 12px; }
</style>
